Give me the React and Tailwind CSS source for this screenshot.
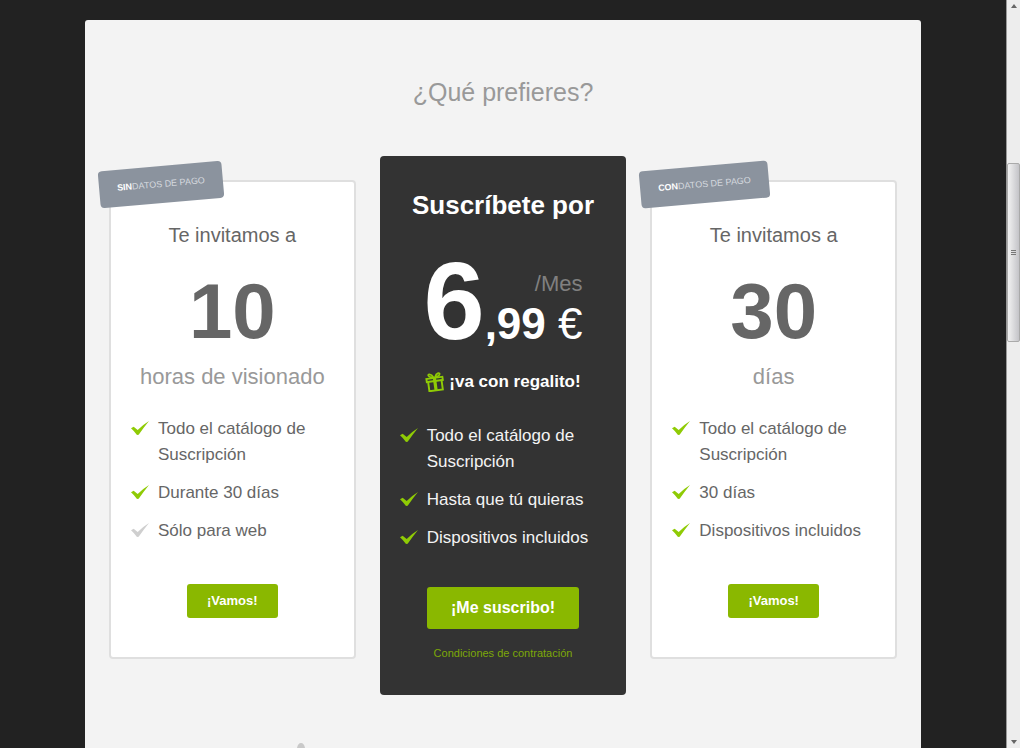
import clsx from 'clsx';

const trialPlans = {
  hours: {
    badgeStrong: 'SIN',
    amount: '10',
    unit: 'horas de visionado',
    features: [
      { text: 'Todo el catálogo de Suscripción' },
      { text: 'Durante 30 días' },
      { text: 'Sólo para web', muted: true },
    ],
  },
  days: {
    badgeStrong: 'CON',
    amount: '30',
    unit: 'días',
    features: [
      { text: 'Todo el catálogo de Suscripción' },
      { text: '30 días' },
      { text: 'Dispositivos incluidos' },
    ],
  },
};

const subscriptionFeatures = [
  { text: 'Todo el catálogo de Suscripción' },
  { text: 'Hasta que tú quieras' },
  { text: 'Dispositivos incluidos' },
];

const CheckIcon = ({ muted }) => (
  <svg
    viewBox="0 0 54 42"
    aria-hidden="true"
    className={clsx('mt-[5px] h-3.5 w-[18px] shrink-0', muted ? 'text-[#cfcfcf]' : 'text-[#8fcb05]')}
  >
    <path fill="currentColor" d="M0 22 L8 17 L20 27 Q36 11 54 0 Q38 20 23 41 L18 42 Q10 31 0 22 Z" />
  </svg>
);

const GiftIcon = () => (
  <svg viewBox="0 0 60 62" aria-hidden="true" className="h-5 w-5 shrink-0" fill="none" stroke="#8fcb05" strokeWidth="6">
    <g transform="rotate(-8 30 32)">
      <rect x="5" y="18" width="50" height="10" />
      <path d="M9 28 V57 H51 V28" />
      <path d="M30 16 V58" strokeWidth="10" />
      <path d="M28 16 C22 2 8 3 13 10 C15 14 22 16 28 16 Z" strokeWidth="5" />
      <path d="M32 16 C38 2 52 3 47 10 C45 14 38 16 32 16 Z" strokeWidth="5" />
    </g>
  </svg>
);

const FeatureList = ({ features }) => (
  <ul className="flex w-full flex-col gap-3 pr-4 pl-5 text-[17px] leading-[26px]">
    {features.map((feature) => (
      <li key={feature.text} className="flex items-start gap-[9px]">
        <CheckIcon muted={feature.muted} />
        <span>{feature.text}</span>
      </li>
    ))}
  </ul>
);

const TrialCard = ({ plan }) => (
  <article className="relative mt-6 flex flex-col items-center rounded-[4px] border-2 border-[#dfdfdf] bg-white pt-[38px] pb-[39px] text-[#666666]">
    <p className="absolute -top-4 -left-3 -rotate-5 rounded-[4px] bg-[#8b939e] px-[18px] text-[9px] leading-[37px] whitespace-nowrap text-[#d5d9de]">
      <strong className="text-white">{plan.badgeStrong}</strong>DATOS DE PAGO
    </p>
    <h2 className="text-xl leading-[30px]">Te invitamos a</h2>
    <p className="mt-[22px] text-[78px] leading-[78px] font-bold">{plan.amount}</p>
    <p className="mt-3 mb-6 text-[22px] leading-[30px] text-[#999999]">{plan.unit}</p>
    <FeatureList features={plan.features} />
    <button type="button" className="mt-10 h-[34px] rounded-[3px] bg-[#8ab800] px-5 text-[13px] font-bold text-white">
      ¡Vamos!
    </button>
  </article>
);

const SubscriptionCard = () => (
  <article className="flex flex-col items-center rounded-[4px] bg-[#333333] pt-[33px] pb-[34px] text-[#f3f3f3]">
    <h2 className="text-[26px] leading-[32px] font-bold text-white">Suscríbete por</h2>
    <div className="mt-10 flex items-start text-white">
      <span className="text-[110px] leading-[80px] font-bold">6</span>
      <div className="flex flex-col items-end gap-1.5 pt-[11px]">
        <span className="text-[22px] leading-6 text-[#808080]">/Mes</span>
        <span className="text-[44px] leading-[44px]">
          <strong>,99</strong> €
        </span>
      </div>
    </div>
    <p className="mt-6 mb-[29px] flex items-center gap-1 text-[17px] leading-6 font-bold text-white">
      <GiftIcon />
      ¡va con regalito!
    </p>
    <FeatureList features={subscriptionFeatures} />
    <button type="button" className="mt-9 h-[42px] rounded-[3px] bg-[#8ab800] px-6 text-base font-bold text-white">
      ¡Me suscribo!
    </button>
    <a href="#condiciones" className="mt-4 text-[11px] leading-4 text-[#7da808]">
      Condiciones de contratación
    </a>
  </article>
);

const ScrollTrack = () => (
  <div aria-hidden="true" className="flex w-[14px] shrink-0 flex-col items-center border-l border-[#999999] bg-[#ededed] py-1">
    <svg viewBox="0 0 6 4" className="h-1 w-1.5 fill-[#666666]">
      <path d="M0 4 L3 0 L6 4 Z" />
    </svg>
    <div className="grow-[155]" />
    <div className="flex h-[179px] w-full flex-col items-center justify-center gap-px rounded-[2px] border border-[#aaaaaa] bg-linear-to-r from-[#f2f2f2] to-[#c4c4c8]">
      <span className="h-px w-[5px] bg-[#777777]" />
      <span className="h-px w-[5px] bg-[#777777]" />
      <span className="h-px w-[5px] bg-[#777777]" />
    </div>
    <div className="grow-[398]" />
    <svg viewBox="0 0 6 4" className="h-1 w-1.5 fill-[#666666]">
      <path d="M0 0 L3 4 L6 0 Z" />
    </svg>
  </div>
);

function App() {
  return (
    <div className="flex min-h-screen bg-[#222222] font-['Liberation_Sans',Arial,sans-serif]">
      <main className="flex flex-1 justify-center pt-5">
        <section className="flex w-full max-w-[836px] flex-col rounded-t-[3px] bg-[#f3f3f3] px-6 pt-14">
          <h1 className="text-center text-[25px] leading-[32px] text-[#999999]">¿Qué prefieres?</h1>
          <div className="mt-12 grid grid-cols-3 items-start gap-6">
            <TrialCard plan={trialPlans.hours} />
            <SubscriptionCard />
            <TrialCard plan={trialPlans.days} />
          </div>
          {/* Tip of the pointer of the next block */}
          <div className="mt-auto pl-[188px]">
            <svg viewBox="0 0 8 5" aria-hidden="true" className="h-[5px] w-2 fill-[#c9c9c9]">
              <path d="M0 5 Q1 0 4 0 Q7 0 8 5 Z" />
            </svg>
          </div>
        </section>
      </main>
      <ScrollTrack />
    </div>
  );
}

export default App;
